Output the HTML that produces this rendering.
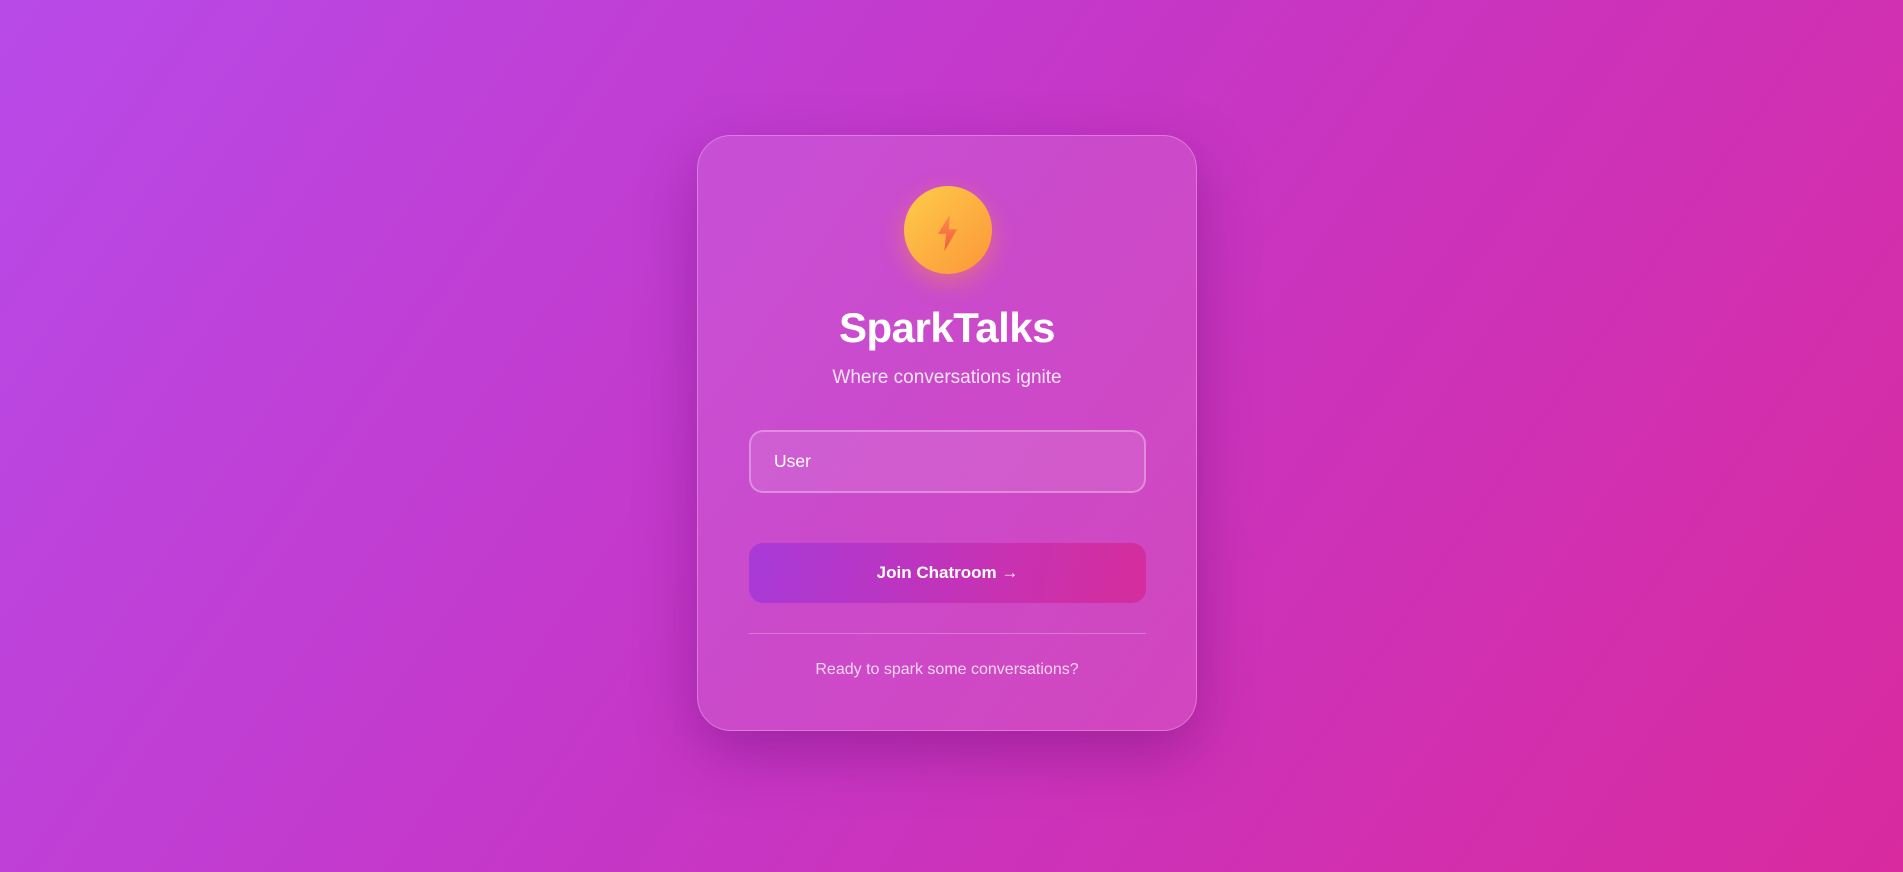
<!DOCTYPE html>
<html><head><meta charset="utf-8"><style>
*{margin:0;padding:0;box-sizing:border-box}
html,body{width:1903px;height:872px;overflow:hidden}
body{background:linear-gradient(125deg,#b84ae8 0%,#c537c8 45%,#d92a9f 100%);font-family:"Liberation Sans",sans-serif;position:relative}
.card{position:absolute;left:697px;top:135px;width:500px;height:596px;border-radius:34px;background:rgba(255,255,255,0.1);border:1px solid rgba(255,255,255,0.28);box-shadow:0 22px 60px rgba(80,0,100,0.35)}
.logo{position:absolute;left:206px;top:50px;width:88px;height:88px;border-radius:50%;background:linear-gradient(135deg,#ffcc4a,#fb9638);box-shadow:0 8px 24px rgba(255,150,60,0.45)}
.logo svg{position:absolute;left:33px;top:28px}
h1{position:absolute;top:168px;width:100%;text-align:center;color:#fff;font-size:42px;font-weight:bold;letter-spacing:-0.5px}
.sub{position:absolute;top:231px;width:100%;text-align:center;color:rgba(255,255,255,0.85);font-size:19px}
.input{position:absolute;left:51px;top:294px;width:397px;height:63px;border-radius:14px;border:2px solid rgba(255,255,255,0.3);background:rgba(255,255,255,0.1);color:#fff;font-size:17.5px;padding-left:23px;line-height:59px}
.btn{position:absolute;left:51px;top:407px;width:397px;height:60px;border-radius:14px;background:linear-gradient(100deg,#a83ad8,#c632b4 60%,#d52d9c);color:#fff;font-weight:bold;font-size:17px;text-align:center;line-height:60px}
.hr{position:absolute;left:51px;top:497px;width:397px;height:1px;background:rgba(255,255,255,0.25)}
.foot{position:absolute;top:525px;width:100%;text-align:center;color:rgba(255,255,255,0.78);font-size:16px}
</style></head><body>
<div class="card">
<div class="logo"><svg width="22" height="38" viewBox="0 0 24 40"><defs><linearGradient id="g" x1="0" y1="0" x2="0" y2="1"><stop offset="0" stop-color="#ff8a4a"/><stop offset="1" stop-color="#f2503e"/></linearGradient></defs><path d="M14 0 L1 21 L10 21 L8 40 L22 16 L13 16 Z" fill="url(#g)" opacity="0.9"/></svg></div>
<h1>SparkTalks</h1>
<div class="sub">Where conversations ignite</div>
<div class="input">User</div>
<div class="btn">Join Chatroom →</div>
<div class="hr"></div>
<div class="foot">Ready to spark some conversations?</div>
</div>
</body></html>
